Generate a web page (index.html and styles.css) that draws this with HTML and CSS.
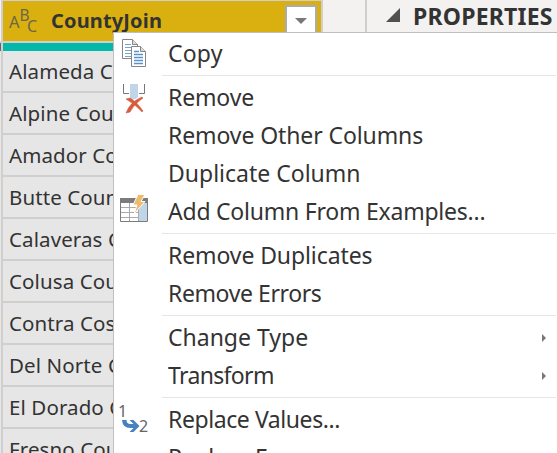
FILE: index.html
```html
<!DOCTYPE html>
<html lang="en">
<head>
<meta charset="utf-8">
<title>Query editor</title>
<link rel="stylesheet" href="styles.css">
</head>
<body>
<main class="editor">
  <div class="previous-column"></div>
  <section class="grid">
    <header class="column-head">
      <svg class="type-icon" width="32" height="30" viewBox="0 0 32 30"><text x="1" y="22" font-size="16.5">A</text><text x="11.5" y="15" font-size="15.5">B</text><text x="19" y="26" font-size="16">C</text></svg>
      <span class="column-name">CountyJoin</span>
      <span class="filter"><svg width="12" height="6" viewBox="0 0 12 6"><path d="M0 0h12L6 6z" fill="#777"/></svg></span>
    </header>
    <div class="quality"></div>
    <div class="cell">Alameda County</div>
    <div class="cell">Alpine County</div>
    <div class="cell">Amador County</div>
    <div class="cell">Butte County</div>
    <div class="cell">Calaveras County</div>
    <div class="cell">Colusa County</div>
    <div class="cell">Contra Costa County</div>
    <div class="cell">Del Norte County</div>
    <div class="cell">El Dorado County</div>
    <div class="cell">Fresno County</div>
  </section>
  <div class="gutter"></div>
  <aside class="properties">
    <svg width="14" height="14" viewBox="0 0 14 14"><path d="M14 0v14H0z" fill="#505050"/></svg>
    <h2>PROPERTIES</h2>
  </aside>
</main>
<nav class="menu">
  <div class="group">
    <div class="item copy"><svg class="icon" width="32" height="30" viewBox="0 0 32 30">
      <g stroke="#858585" fill="#fff"><path d="M.5 .5h10l5 5v14H.5z"/><path d="M10.500 .5v5h5" fill="#ddd"/></g>
      <path d="M3 5.500h6M3 8.500h8M3 11.500h8M3 14.500h8M3 17.500h8" stroke="#75a4cc"/>
      <g stroke="#858585" fill="#fff"><path d="M9.500 7.500h9l5 5v15h-14z"/><path d="M18.500 7.500v5h5" fill="#ddd"/></g>
      <path d="M12 12.500h5M12 15.500h9M12 18.500h9M12 21.500h9M12 24.500h9" stroke="#5793c9" stroke-width="1.400"/></svg><span>Copy</span></div>
  </div>
  <div class="group">
    <div class="item remove"><svg class="icon" width="32" height="30" viewBox="0 -1 32 30">
      <path d="M8 0h8v15h-8z" fill="#c1d5ea"/><path d="M1.500 0v9.500h5.500M22.500 0v9.500h-5.500" fill="none" stroke="#777"/>
      <path d="M4 15Q12 18 19 28M20 14Q11 18 6 28" fill="none" stroke="#fff" stroke-width="5"/>
      <path d="M4 15l4-1q6 3 13 13l-1 1q-6-7-16-13M20 13l1 1Q12 20 8 28l-4 1Q8 18 20 13" fill="#d65c3e" stroke="#d65c3e" stroke-width=".6"/></svg><span>Remove</span></div>
    <div class="item other"><span>Remove Other Columns</span></div>
    <div class="item duplicate"><span>Duplicate Column</span></div>
    <div class="item examples"><svg class="icon" width="32" height="34" viewBox="2 0 32 34">
      <path d="M.5 3.500h27v23H.5z" fill="#fff" stroke="#7c7c7c"/><path d="M0 3h28v5H0z" fill="#7c7c7c"/><path d="M19 8h8v18h-8z" fill="#c1d5ea"/>
      <path d="M9.500 8v18M18.500 8v18M1 12.500h18M1 17.500h18M1 22.500h18" stroke="#aaa" fill="none"/>
      <path d="M18 -.5h7l-4 7h4L14 19l3-9h-4z" fill="#edbb69" stroke="#fff" stroke-width="1"/></svg><span>Add Column From Examples...</span></div>
  </div>
  <div class="group">
    <div class="item dedupe"><span>Remove Duplicates</span></div>
    <div class="item errors"><span>Remove Errors</span></div>
  </div>
  <div class="group">
    <div class="item change"><span>Change Type</span><svg class="arrow" width="4" height="8" viewBox="0 0 4 8"><path d="M0 0l4 4-4 4z" fill="#777"/></svg></div>
    <div class="item transform"><span>Transform</span><svg class="arrow" width="4" height="8" viewBox="0 0 4 8"><path d="M0 0l4 4-4 4z" fill="#777"/></svg></div>
  </div>
  <div class="group">
    <div class="item replace"><svg class="icon" width="32" height="32" viewBox="3 0 32 32">
      <text x="-1" y="13" font-size="16">1</text><text x="20" y="28" font-size="16">2</text>
      <path d="M3 16h4.500q0 4 4 4h3l-4-4h4l6 6-6 6h-4l4-4h-3Q3.500 24 3 16z" fill="#4682bd"/></svg><span>Replace Values...</span></div>
    <div class="item replace-errors"><span>Replace Errors...</span></div>
  </div>
</nav>
</body>
</html>
```
FILE: styles.css
```css
* { box-sizing: border-box; }
body {
  margin: 0;
  height: 453px;
  overflow: hidden;
  background: #f3f2f1;
  color: #333;
  font-family: "Noto Sans", "Open Sans", sans-serif;
}
.editor { display: flex; height: 453px; overflow: hidden; }
.previous-column {
  width: 1px;
  background: linear-gradient(#f3f2f1 41px, #d0cfce 41px 43px, #666 43px 51px, #e6e6e6 51px);
}
.grid { width: 322px; border-left: 2px solid #d0cfce; border-right: 2px solid #d0cfce; }
.column-head {
  display: flex;
  align-items: center;
  height: 43px;
  padding-left: 5px;
  background: #d9b00f;
  border-top: 1px solid #d0cfce;
  border-bottom: 2px solid #d0cfce;
}
.type-icon { fill: #6e6648; overflow: visible; }
.column-name { margin: -2px 0 0 11px; font-size: 20px; font-weight: 700; letter-spacing: .15px; }
.filter {
  display: flex;
  align-self: flex-start;
  justify-content: center;
  width: 32px;
  height: 34px;
  margin: 4px 4px 0 auto;
  padding-top: 11px;
  background: #fff;
  border: 2px solid #ababab;
}
.quality { height: 8px; background: #01b8aa; }
.cell {
  height: 42px;
  padding-left: 6px;
  background: #e6e6e6;
  border-bottom: 2px solid #d0cfce;
  font-size: 20.5px;
  line-height: 40px;
  letter-spacing: .1px;
  white-space: nowrap;
}
.gutter { width: 44px; border-right: 2px solid #d0cfce; }
.properties { display: flex; align-items: flex-start; padding: 8px 0 0 19px; }
.properties h2 { margin: -8px 0 0 13px; font-size: 23px; font-weight: 700; line-height: 33px; letter-spacing: .2px; }
.menu {
  position: absolute;
  top: 32px;
  left: 113px;
  width: 444px;
  height: 421px;
  overflow: hidden;
  padding-top: 2px;
  background: #fff;
  border-top: 1px solid #c0c0c0;
  border-left: 1px solid #c0c0c0;
}
.group + .group {
  padding-top: 6px;
  background: linear-gradient(#e6e6e6, #e6e6e6) 48px 2px / 394px 1px no-repeat;
}
.item {
  display: flex;
  align-items: center;
  height: 38px;
  padding-left: 8px;
  font-size: 23px;
  line-height: 36px;
  white-space: nowrap;
}
.item span { margin: -2px 0 0 46px; }
.icon { flex: none; fill: #666; overflow: visible; }
.item .icon + span { margin-left: 14px; }
.arrow { margin: 0 11px 0 auto; }
.copy { letter-spacing: .2px; }
.remove { letter-spacing: -.15px; }
.other, .dedupe { letter-spacing: -.1px; }
.examples { letter-spacing: -.23px; }
.errors { letter-spacing: -.4px; }
.transform { letter-spacing: -.65px; }
.replace, .replace-errors { letter-spacing: -.42px; }
```
